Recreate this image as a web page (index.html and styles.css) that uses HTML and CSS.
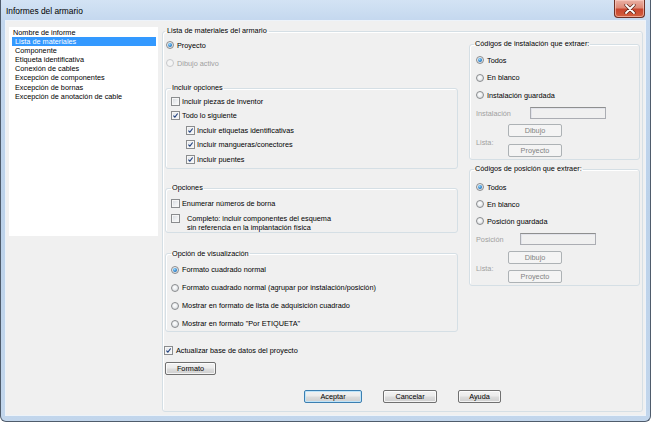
FILE: index.html
```html
<!DOCTYPE html>
<html lang="es">
<head>
<meta charset="utf-8">
<title>Informes del armario</title>
<link rel="stylesheet" href="styles.css">
</head>
<body>
<div class="window">
  <div class="titlebar">
    <span class="title">Informes del armario</span>
    <button class="close" type="button" aria-label="Cerrar">
      <svg width="12" height="10" viewBox="0 0 12 10"><path d="M2 1 L10 9 M10 1 L2 9" stroke="#5a2418" stroke-width="3.2" stroke-linecap="round"/><path d="M2 1 L10 9 M10 1 L2 9" stroke="#ffffff" stroke-width="1.8" stroke-linecap="round"/></svg>
    </button>
  </div>
  <div class="client">
    <div class="listbox">
      <div class="item head">Nombre de informe</div>
      <div class="item sel">Lista de materiales</div>
      <div class="item">Componente</div>
      <div class="item">Etiqueta identificativa</div>
      <div class="item">Conexión de cables</div>
      <div class="item">Excepción de componentes</div>
      <div class="item">Excepción de bornas</div>
      <div class="item">Excepción de anotación de cable</div>
    </div>
    <fieldset class="group main">
      <legend>Lista de materiales del armario</legend>
      <div class="cols">
        <div class="col-left">
          <div class="opt"><span class="radio on"></span><span>Proyecto</span></div>
          <div class="opt disabled"><span class="radio"></span><span>Dibujo activo</span></div>

          <fieldset class="group sub incl">
            <legend>Incluir opciones</legend>
            <div class="chk"><span class="box"></span><span>Incluir piezas de Inventor</span></div>
            <div class="chk"><span class="box on"><svg viewBox="0 0 9 9"><path d="M1.8 4.6 L3.7 6.6 L7.3 1.9" fill="none" stroke="#21407e" stroke-width="1.4"/></svg></span><span>Todo lo siguiente</span></div>
            <div class="chk indent"><span class="box on"><svg viewBox="0 0 9 9"><path d="M1.8 4.6 L3.7 6.6 L7.3 1.9" fill="none" stroke="#21407e" stroke-width="1.4"/></svg></span><span>Incluir etiquetas identificativas</span></div>
            <div class="chk indent"><span class="box on"><svg viewBox="0 0 9 9"><path d="M1.8 4.6 L3.7 6.6 L7.3 1.9" fill="none" stroke="#21407e" stroke-width="1.4"/></svg></span><span>Incluir mangueras/conectores</span></div>
            <div class="chk indent"><span class="box on"><svg viewBox="0 0 9 9"><path d="M1.8 4.6 L3.7 6.6 L7.3 1.9" fill="none" stroke="#21407e" stroke-width="1.4"/></svg></span><span>Incluir puentes</span></div>
          </fieldset>

          <fieldset class="group sub opts">
            <legend>Opciones</legend>
            <div class="chk"><span class="box"></span><span>Enumerar números de borna</span></div>
            <div class="chk multi"><span class="box"></span><span class="multitext">Completo: incluir componentes del esquema<br>sin referencia en la implantación física</span></div>
          </fieldset>

          <fieldset class="group sub vis">
            <legend>Opción de visualización</legend>
            <div class="opt tight"><span class="radio on"></span><span>Formato cuadrado normal</span></div>
            <div class="opt tight"><span class="radio"></span><span>Formato cuadrado normal (agrupar por instalación/posición)</span></div>
            <div class="opt tight"><span class="radio"></span><span>Mostrar en formato de lista de adquisición cuadrado</span></div>
            <div class="opt tight"><span class="radio"></span><span>Mostrar en formato "Por ETIQUETA"</span></div>
          </fieldset>

          <div class="chk update"><span class="box on"><svg viewBox="0 0 9 9"><path d="M1.8 4.6 L3.7 6.6 L7.3 1.9" fill="none" stroke="#21407e" stroke-width="1.4"/></svg></span><span>Actualizar base de datos del proyecto</span></div>
          <button class="btn formato" type="button">Formato</button>
        </div>

        <div class="col-right">
          <fieldset class="group side first">
            <legend>Códigos de instalación que extraer:</legend>
            <div class="opt side-opt"><span class="radio on"></span><span>Todos</span></div>
            <div class="opt side-opt"><span class="radio"></span><span>En blanco</span></div>
            <div class="opt side-opt"><span class="radio"></span><span>Instalación guardada</span></div>
            <div class="field"><span class="lbl wide">Instalación</span><span class="textbox w1"></span></div>
            <div class="lista">
              <span class="lbl list">Lista:</span>
              <div class="stack">
                <button class="btn off" type="button">Dibujo</button>
                <button class="btn off" type="button">Proyecto</button>
              </div>
            </div>
          </fieldset>
          <fieldset class="group side second">
            <legend>Códigos de posición que extraer:</legend>
            <div class="opt side-opt"><span class="radio on"></span><span>Todos</span></div>
            <div class="opt side-opt"><span class="radio"></span><span>En blanco</span></div>
            <div class="opt side-opt"><span class="radio"></span><span>Posición guardada</span></div>
            <div class="field"><span class="lbl narrow">Posición</span><span class="textbox w2"></span></div>
            <div class="lista">
              <span class="lbl list">Lista:</span>
              <div class="stack">
                <button class="btn off" type="button">Dibujo</button>
                <button class="btn off" type="button">Proyecto</button>
              </div>
            </div>
          </fieldset>
        </div>
      </div>
      <div class="actions">
        <button class="btn default accept" type="button">Aceptar</button>
        <button class="btn cancel" type="button">Cancelar</button>
        <button class="btn help" type="button">Ayuda</button>
      </div>
    </fieldset>
  </div>
</div>
</body>
</html>
```
FILE: styles.css
```css
* { box-sizing: border-box; }
html, body { margin: 0; padding: 0; }
body {
  width: 651px;
  height: 422px;
  overflow: hidden;
  background: #ffffff;
  font-family: "Liberation Sans", Arial, sans-serif;
  font-size: 7.3px;
  color: #000;
}

.window {
  width: 651px;
  height: 422px;
  display: flex;
  flex-direction: column;
  padding: 0 5px 6px 5px;
  background: linear-gradient(to bottom, #d3e3f4 0px, #c3d7ee 22px, #bcd2ea 200px, #c2d6ec 422px);
  border: 1px solid #4f5c6c;
  border-top: none;
  border-radius: 0 0 6px 6px;
}

.titlebar {
  height: 21px;
  flex: none;
  display: flex;
  align-items: flex-start;
  justify-content: space-between;
}
.title {
  font-family: "Liberation Sans", Arial, sans-serif;
  font-size: 8.4px;
  line-height: 10px;
  margin-top: 6px;
  color: #000;
}
.close {
  width: 31px;
  height: 18px;
  margin: 0;
  padding: 0;
  border: 1px solid #6d3025;
  border-top: none;
  border-radius: 0 0 4px 4px;
  background: linear-gradient(to bottom, #eab1a5 0%, #de8a77 45%, #c9462f 55%, #d3603f 100%);
  box-shadow: inset 0 0 0 1px rgba(255, 210, 200, 0.6);
  display: flex;
  align-items: center;
  justify-content: center;
}
.close svg { display: block; }

.client {
  flex: 1;
  display: flex;
  align-items: stretch;
  background: #f0f0f0;
  box-shadow: 0 0 0 1px rgba(255, 255, 255, 0.7);
  min-height: 0;
}

.listbox {
  width: 149px;
  height: 209px;
  margin: 6px 0 0 3px;
  background: #ffffff;
  border: 1px solid #ffffff;
  flex: none;
}
.item {
  height: 9.1px;
  line-height: 9.1px;
  padding-left: 3px;
  margin: 0 1px 0 2px;
  white-space: nowrap;
}
.item.head { padding-left: 2px; margin-left: 1px; }
.item.sel { background: #3399ff; color: #ffffff; }

.group {
  margin: 0;
  border: 1px solid #d5dfe5;
  border-radius: 3px;
  box-shadow: inset 1px 1px 0 #ffffff;
  min-width: 0;
}
.group > legend {
  line-height: 10px;
  height: 10px;
  padding: 0 2px;
  margin: 0;
  white-space: nowrap;
}

.main {
  flex: 1;
  margin: 5px 2px 3px 4px;
  padding: 0 2px 0 2px;
}

.cols {
  display: grid;
  grid-template-columns: 293px 171px;
  column-gap: 11px;
  align-items: start;
}

.opt {
  display: flex;
  align-items: center;
  height: 18px;
  white-space: nowrap;
}
.col-left > .opt { padding-left: 1px; }
.opt .radio { margin-right: 3px; }
.opt.disabled { color: #a0a0a0; }
.opt.tight { height: 14px; margin-top: 4px; }
.opt.tight:first-of-type { margin-top: 0; }

.radio {
  width: 8px;
  height: 8px;
  flex: none;
  border-radius: 50%;
  border: 1px solid #8a8c8e;
  background: radial-gradient(circle at 45% 40%, #ffffff 0%, #eceef0 45%, #c9cdd2 100%);
  display: flex;
  align-items: center;
  justify-content: center;
}
.radio.on::after {
  content: "";
  width: 4px;
  height: 4px;
  border-radius: 50%;
  background: radial-gradient(circle at 40% 35%, #9fdcff 0%, #2f86cf 55%, #174f8c 100%);
}
.opt.disabled .radio {
  border-color: #c6c8ca;
  background: #f4f4f4;
}

.chk {
  display: flex;
  align-items: center;
  height: 14.5px;
  white-space: nowrap;
}
.chk .box { margin-right: 2px; }
.chk.indent { padding-left: 15px; }

.box {
  width: 9px;
  height: 9px;
  flex: none;
  border: 1px solid #8a8c8e;
  background: linear-gradient(135deg, #d4d7db 0%, #eef0f2 60%, #fbfbfb 100%);
  box-shadow: inset 0 0 0 1px #f6f6f6;
  display: block;
}
.box.on { background: linear-gradient(135deg, #e3e6ea 0%, #f6f7f8 100%); }
.box svg { display: block; width: 7px; height: 7px; }

.sub { padding: 0 5px; }
.sub > legend { margin-left: 0; padding: 0 1px; }

.incl { margin-top: 11px; padding-top: 1px; padding-bottom: 1px; }
.opts { margin-top: 14.5px; padding-top: 3px; padding-bottom: 0; }
.vis { margin-top: 15.5px; padding-top: 4px; padding-bottom: 0; }

.chk.multi {
  height: auto;
  align-items: flex-start;
  padding-top: 3px;
}
.multitext {
  line-height: 9px;
  margin-top: 0.5px;
  margin-left: 5px;
}

.chk.update { margin-top: 12px; margin-left: -1px; height: 14px; }
.chk.update .box { margin-right: 3px; }

.btn {
  font-family: "Liberation Sans", Arial, sans-serif;
  font-size: 7.3px;
  color: #000;
  height: 13px;
  padding: 0;
  margin: 0;
  border: 1px solid #707070;
  border-radius: 2px;
  background: linear-gradient(to bottom, #f2f2f2 0%, #ebebeb 48%, #dddddd 52%, #cfcfcf 100%);
  box-shadow: inset 0 0 0 1px rgba(255, 255, 255, 0.75);
  line-height: 11px;
  text-align: center;
  display: block;
}
.btn.formato { width: 51px; margin-top: 4px; }
.btn.default {
  border-color: #3c7fb1;
  box-shadow: inset 0 0 0 1px #bfe4f9;
}
.btn.off {
  width: 54px;
  border-color: #adb2b5;
  background: #f4f4f4;
  box-shadow: none;
  color: #838383;
}

.actions {
  display: flex;
  gap: 21px;
  margin-top: 15px;
  padding-left: 139px;
}
.accept { width: 58px; }
.cancel { width: 54px; }
.help { width: 43px; }

.side { padding: 0 6px 2px 6px; }
.side > legend { margin-left: -2px; padding: 0 1px; }
.side.first { margin-top: 3px; padding-top: 4px; }
.side.second { margin-top: 4px; padding-top: 6px; }
.side-opt { height: 14px; margin-top: 3.5px; }
.side-opt:first-of-type { margin-top: 0; }
.side-opt .radio { margin-right: 3px; }
.second .side-opt { margin-top: 3px; }
.second .side-opt:first-of-type { margin-top: 0; }

.field {
  display: flex;
  align-items: center;
  margin-top: 5px;
  height: 12px;
}
.lbl { color: #a0a0a0; white-space: nowrap; }
.lbl.wide { width: 54px; }
.lbl.narrow { width: 44px; }
.textbox {
  height: 12px;
  border: 1px solid #abadb3;
  border-top-color: #8e8f8f;
  background: #f0f0f0;
  box-shadow: inset 1px 1px 0 #e2e3ea;
}
.textbox.w1 { width: 76px; }
.textbox.w2 { width: 76px; }

.lista {
  display: flex;
  align-items: center;
  margin-top: 5px;
}
.second .lista { margin-top: 6px; }
.lbl.list { width: 32px; padding-top: 3px; }
.stack {
  display: flex;
  flex-direction: column;
  gap: 7px;
}
.second .stack { gap: 6px; }
```
